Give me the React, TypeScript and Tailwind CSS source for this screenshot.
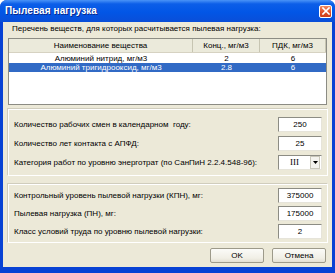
import React from "react";

function Field({ value }: { value: string }) {
  return (
    <div className="w-[44px] h-[15px] bg-white border border-t-[#8c8c84] border-l-[#8c8c84] border-b-[#e6e4da] border-r-[#e6e4da] flex items-center justify-center text-[8px] leading-none text-black">
      {value}
    </div>
  );
}

function Row({ label, children }: { label: string; children: React.ReactNode }) {
  return (
    <div className="flex items-center justify-between">
      <span className="text-[8px] leading-none text-black whitespace-pre">{label}</span>
      {children}
    </div>
  );
}

export default function App() {
  return (
    <div className="w-[335px] h-[273px] flex flex-col bg-[#0842d4] rounded-t-[7px] overflow-hidden font-['Liberation_Sans',Arial,sans-serif]">
      <div className="h-[22px] shrink-0 flex items-center justify-between pl-[5px] pr-[3px] bg-[linear-gradient(180deg,#4a93f7_0%,#0c5ee8_18%,#0256e6_55%,#0a4ed8_100%)]">
        <span className="text-white font-bold text-[10px] leading-none [text-shadow:1px_1px_0_#0b2a8e] tracking-[0.1px]">
          Пылевая нагрузка
        </span>
        <div className="w-[13px] h-[13px] rounded-[2px] border border-white bg-[linear-gradient(180deg,#f08a62_0%,#e0502a_55%,#c93d1a_100%)] flex items-center justify-center">
          <svg width="8" height="8" viewBox="0 0 8 8">
            <path d="M1 1 L7 7 M7 1 L1 7" stroke="white" strokeWidth="1.6" strokeLinecap="square" />
          </svg>
        </div>
      </div>
      <div className="flex-1 mx-[3px] mb-[6px] bg-[#ece9d8] flex flex-col">
        <div className="h-[12px] mt-[1px] pl-[9px] flex items-center text-[8px] leading-none text-black">
          Перечень веществ, для которых расчитывается пылевая нагрузка:
        </div>
        <div className="mt-[3px] mx-[5px] h-[67px] bg-white border border-[#8c8c84] flex flex-col">
          <div className="h-[14px] flex bg-[#ebeadb] border-b border-[#d6d2c2] text-[8px] leading-none text-black">
            <div className="w-[184px] flex items-center justify-center border-r border-[#c7c5b2]">Наименование вещества</div>
            <div className="w-[67px] flex items-center justify-center border-r border-[#c7c5b2]">Конц., мг/м3</div>
            <div className="w-[66px] flex items-center justify-center border-r border-[#c7c5b2]">ПДК, мг/м3</div>
          </div>
          <div className="h-[9px] mt-[1px] flex text-[8px] leading-none text-black">
            <div className="w-[184px] flex items-center justify-center">Алюминий нитрид, мг/м3</div>
            <div className="w-[67px] flex items-center justify-center">2</div>
            <div className="w-[66px] flex items-center justify-center">6</div>
          </div>
          <div className="h-[9px] flex bg-[#316ac5] text-[8px] leading-none text-white">
            <div className="w-[184px] flex items-center justify-center">Алюминий тригидрооксид, мг/м3</div>
            <div className="w-[67px] flex items-center justify-center">2.8</div>
            <div className="w-[66px] flex items-center justify-center">6</div>
          </div>
        </div>
        <div className="mt-[3px] mx-[4px] h-[68px] border border-t-[#d0cdbd] border-l-[#d0cdbd] border-b-white border-r-white shadow-[inset_1px_1px_0_#ffffff] pt-[8px] pl-[6px] pr-[5px] flex flex-col gap-[4px]">
          <Row label="Количество рабочих смен в календарном  году:">
            <Field value="250" />
          </Row>
          <Row label="Количество лет контакта с АПФД:">
            <Field value="25" />
          </Row>
          <Row label="Категория работ по уровню энерготрат (по СанПиН 2.2.4.548-96):">
            <div className="w-[44px] h-[15px] bg-white border border-t-[#8c8c84] border-l-[#8c8c84] border-b-[#e6e4da] border-r-[#e6e4da] flex items-center">
              <div className="flex-1 flex items-center justify-center text-[9px] leading-none text-black font-['Liberation_Serif',serif]">III</div>
              <div className="w-[10px] h-[13px] mr-[1px] bg-[#f4f3ee] border border-[#c9c7ba] flex items-center justify-center">
                <svg width="5" height="3" viewBox="0 0 5 3">
                  <path d="M0 0 H5 L2.5 3 Z" fill="#000" />
                </svg>
              </div>
            </div>
          </Row>
        </div>
        <div className="mt-[7px] mx-[4px] h-[60px] border border-t-[#d0cdbd] border-l-[#d0cdbd] border-b-white border-r-white shadow-[inset_1px_1px_0_#ffffff] pt-[4px] pl-[6px] pr-[5px] flex flex-col gap-[3px]">
          <Row label="Контрольный уровень пылевой нагрузки (КПН), мг:">
            <Field value="375000" />
          </Row>
          <Row label="Пылевая нагрузка (ПН), мг:">
            <Field value="175000" />
          </Row>
          <Row label="Класс условий труда по уровню пылевой нагрузки:">
            <Field value="2" />
          </Row>
        </div>
        <div className="mt-[5px] mr-[6px] flex justify-end gap-[8px]">
          <div className="w-[54px] h-[15px] rounded-[2px] border border-[#9d9a8a] bg-[linear-gradient(180deg,#fbfbf8_0%,#f1efe6_70%,#e3e0d3_100%)] flex items-center justify-center text-[8px] leading-none text-black">
            OK
          </div>
          <div className="w-[54px] h-[15px] rounded-[2px] border border-[#9d9a8a] bg-[linear-gradient(180deg,#fbfbf8_0%,#f1efe6_70%,#e3e0d3_100%)] flex items-center justify-center text-[8px] leading-none text-black">
            Отмена
          </div>
        </div>
      </div>
    </div>
  );
}
